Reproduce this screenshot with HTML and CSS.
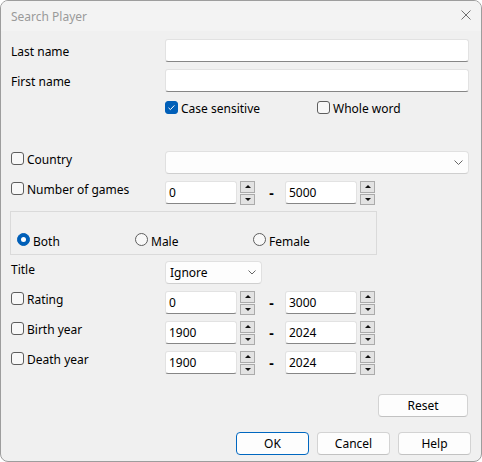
FILE: index.html
```html
<!DOCTYPE html>
<html lang="en">
<head>
    <meta charset="UTF-8">
    <meta name="viewport" content="width=device-width, initial-scale=1.0">
    <title>Search Player</title>
    <link rel="stylesheet" href="styles.css">
</head>
<body>
    <div class="window">
        <div class="titlebar">
            <span class="caption">Search Player</span>
            <svg class="close" width="10" height="10" viewBox="0 0 10 10"><path d="M0.5 0.5L9.5 9.5M9.5 0.5L0.5 9.5" stroke="#707070" stroke-width="1"/></svg>
        </div>
        <div class="client">
            <!-- 名字 -->
            <div class="row">
                <span class="label name">Last name</span>
                <div class="edit wide"></div>
            </div>
            <div class="row">
                <span class="label name">First name</span>
                <div class="edit wide"></div>
            </div>
            <div class="row options">
                <span class="label"></span>
                <span class="check opt"><span class="box on"><svg width="11" height="11" viewBox="0 0 11 11"><path d="M2.5 5.8L4.4 7.6L8.4 3.4" fill="none" stroke="#fff" stroke-width="1"/></svg></span>Case sensitive</span>
                <span class="check"><span class="box"></span>Whole word</span>
            </div>

            <!-- 国家 / 局数 -->
            <div class="row country">
                <span class="check label"><span class="box"></span>Country</span>
                <div class="combo wide"><svg width="9" height="5" viewBox="0 0 9 5"><path d="M0.5 0.5L4.5 4.5L8.5 0.5" fill="none" stroke="#666" stroke-width="1"/></svg></div>
            </div>
            <div class="row">
                <span class="check label"><span class="box"></span>Number of games</span>
                <div class="spin"><div class="edit num">0</div><div class="arrows"><span class="up"></span><span class="down"></span></div></div>
                <span class="dash">-</span>
                <div class="spin"><div class="edit num">5000</div><div class="arrows"><span class="up"></span><span class="down"></span></div></div>
            </div>

            <!-- 性别 -->
            <div class="group">
                <span class="radio"><span class="dot on"></span>Both</span>
                <span class="radio"><span class="dot"></span>Male</span>
                <span class="radio"><span class="dot"></span>Female</span>
            </div>

            <div class="row title">
                <span class="label">Title</span>
                <div class="combo short">Ignore<svg width="8" height="5" viewBox="0 0 8 5"><path d="M0.5 0.5L4 4L7.5 0.5" fill="none" stroke="#666" stroke-width="1"/></svg></div>
            </div>
            <div class="row">
                <span class="check label"><span class="box"></span>Rating</span>
                <div class="spin"><div class="edit num">0</div><div class="arrows"><span class="up"></span><span class="down"></span></div></div>
                <span class="dash">-</span>
                <div class="spin"><div class="edit num">3000</div><div class="arrows"><span class="up"></span><span class="down"></span></div></div>
            </div>
            <div class="row">
                <span class="check label"><span class="box"></span>Birth year</span>
                <div class="spin"><div class="edit num">1900</div><div class="arrows"><span class="up"></span><span class="down"></span></div></div>
                <span class="dash">-</span>
                <div class="spin"><div class="edit num">2024</div><div class="arrows"><span class="up"></span><span class="down"></span></div></div>
            </div>
            <div class="row">
                <span class="check label"><span class="box"></span>Death year</span>
                <div class="spin"><div class="edit num">1900</div><div class="arrows"><span class="up"></span><span class="down"></span></div></div>
                <span class="dash">-</span>
                <div class="spin"><div class="edit num">2024</div><div class="arrows"><span class="up"></span><span class="down"></span></div></div>
            </div>

            <!-- 按钮 -->
            <div class="reset-row">
                <button class="btn reset">Reset</button>
            </div>
            <div class="buttons">
                <button class="btn default">OK</button>
                <button class="btn">Cancel</button>
                <button class="btn">Help</button>
            </div>
        </div>
    </div>
</body>
</html>
```

FILE: styles.css
```css
*{
    margin: 0;
    padding: 0;
    box-sizing: border-box;
}
body{
    background-color: #fff;
    font-family: "Noto Sans", "Open Sans", sans-serif;
    font-size: 12px;
    line-height: 16px;
    color: #000;
}
.window{
    width: 482px;
    height: 462px;
    border: 1px solid #9d9d9d;
    border-radius: 8px;
    background-color: #f0f0f0;
    overflow: hidden;
    display: flex;
    flex-direction: column;
}
.titlebar{
    height: 30px;
    flex: none;
    background-color: #f3f3f3;
    display: flex;
    align-items: center;
    justify-content: space-between;
    padding: 2px 10px 0;
}
.caption{
    color: #9a9a9a;
}
.close{
    margin-bottom: 4px;
}
.client{
    flex: 1;
    padding: 8px 12px 0 10px;
}
.row{
    display: flex;
    align-items: flex-start;
    height: 23px;
    margin-top: 7px;
}
.row:first-child{
    margin-top: 0;
}
.label{
    width: 154px;
    flex: none;
    padding-top: 1px;
}
.label.name{
    padding-top: 5px;
}
.row.options{
    height: 16px;
    margin-top: 8px;
}
.row.country{
    margin-top: 35px;
}
.row.title{
    margin-top: 6px;
}

/* 复选框 */
.check{
    display: flex;
    align-items: flex-start;
    white-space: nowrap;
    padding-top: 1px;
}
.check.opt{
    width: 152px;
}
.box{
    width: 13px;
    height: 13px;
    flex: none;
    margin-right: 3px;
    border: 1px solid #5e5e5e;
    border-radius: 3px;
    background-color: #f8f8f8;
}
.box.on{
    background-color: #005fb8;
    border-color: #005fb8;
}
.box svg{
    display: block;
}

/* 输入框 */
.edit{
    height: 23px;
    background-color: #fff;
    border: 1px solid #e2e2e2;
    border-bottom-color: #868686;
    border-radius: 3px;
    line-height: 22px;
    padding-left: 3px;
}
.wide{
    width: 304px;
}
.combo{
    height: 23px;
    background-color: #fdfdfd;
    border: 1px solid #e0e0e0;
    border-bottom-color: #cfcfcf;
    border-radius: 4px;
    line-height: 23px;
    padding: 0 5px 0 4px;
    display: flex;
    justify-content: space-between;
    align-items: center;
}
.combo svg{
    margin-left: auto;
}
.combo.short{
    width: 97px;
}

/* 数字框 */
.spin{
    display: flex;
    height: 23px;
}
.edit.num{
    width: 72px;
}
.arrows{
    width: 15px;
    height: 24px;
    margin-left: 3px;
    display: flex;
    flex-direction: column;
    gap: 1px;
}
.arrows span{
    flex: 1;
    border: 1px solid #ababab;
    background-color: #e3e3e3;
    display: flex;
    align-items: center;
    justify-content: center;
}
.up::after{
    content: "";
    border-left: 3px solid transparent;
    border-right: 3px solid transparent;
    border-bottom: 3px solid #111;
}
.down::after{
    content: "";
    border-left: 3px solid transparent;
    border-right: 3px solid transparent;
    border-top: 3px solid #111;
}
.dash{
    width: 5px;
    margin: 0 11px 0 14px;
    font-size: 14px;
    font-weight: 700;
    line-height: 24px;
    text-align: center;
}

/* 分组框 */
.group{
    width: 367px;
    height: 44px;
    margin: 7px 0 0 -1px;
    border: 1px solid #dadada;
    padding: 21px 0 0 6px;
    display: flex;
}
.radio{
    width: 118px;
    display: flex;
    align-items: flex-start;
    padding-top: 1px;
}
.dot{
    width: 13px;
    height: 13px;
    flex: none;
    margin: -1px 3px 0 0;
    border: 1px solid #5e5e5e;
    border-radius: 50%;
    background-color: #f8f8f8;
    display: flex;
    align-items: center;
    justify-content: center;
}
.dot.on{
    background-color: #005fb8;
    border-color: #005fb8;
}
.dot.on::after{
    content: "";
    width: 5px;
    height: 5px;
    border-radius: 50%;
    background-color: #fff;
}

/* 按钮 */
.reset-row{
    display: flex;
    justify-content: flex-end;
    margin: 20px 1px 0 0;
}
.buttons{
    display: flex;
    justify-content: flex-end;
    gap: 8px;
    margin: 15px -2px 0 0;
}
.btn{
    width: 73px;
    height: 23px;
    font-family: inherit;
    font-size: 12px;
    line-height: 21px;
    color: #000;
    background-color: #fdfdfd;
    border: 1px solid #d3d3d3;
    border-bottom-color: #c2c2c2;
    border-radius: 4px;
}
.btn.reset{
    width: 90px;
}
.btn.default{
    border-color: #0067c0;
}
```
